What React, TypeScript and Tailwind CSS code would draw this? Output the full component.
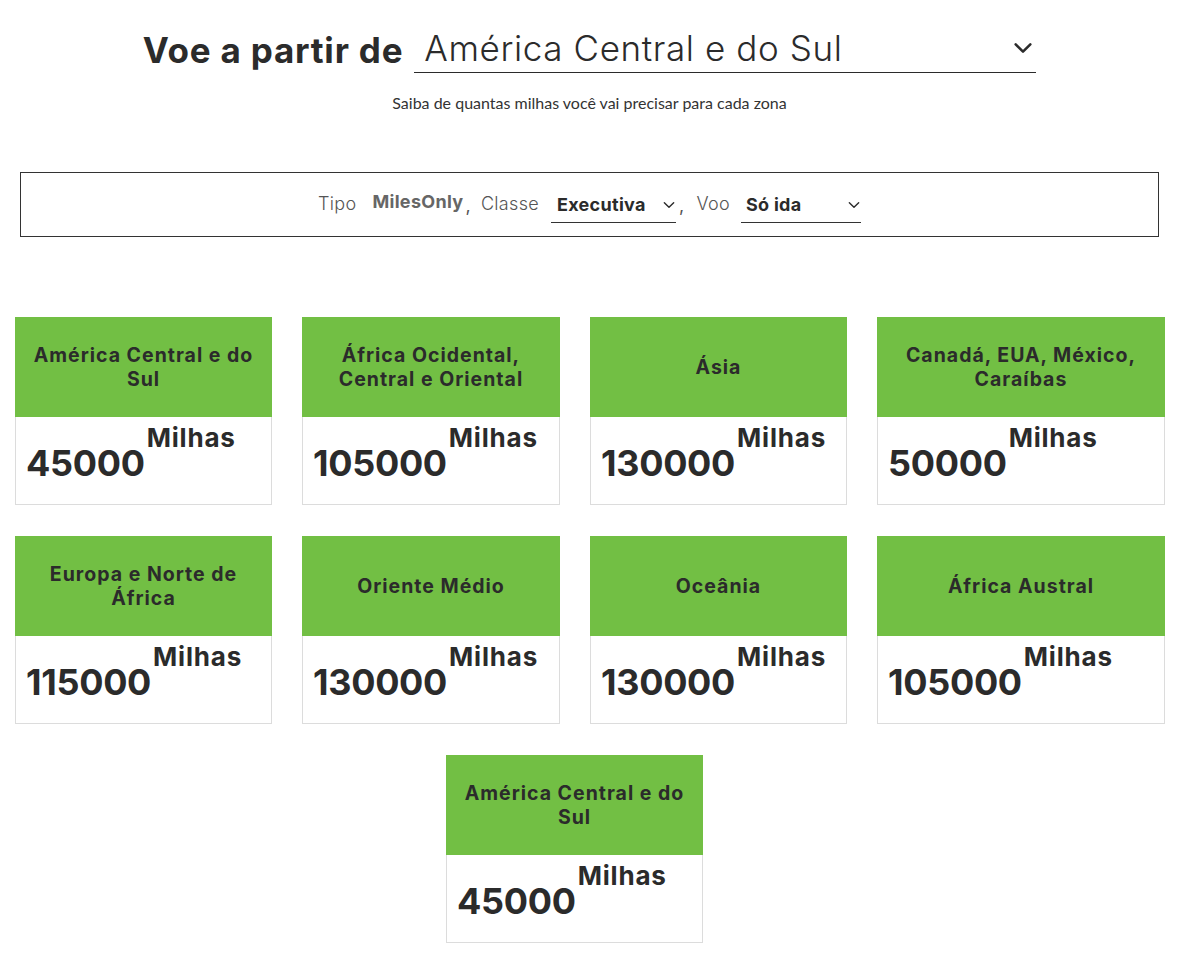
import React from "react";

const F = { fontFamily: "Inter, 'Open Sans', sans-serif" };

function Chevron({ size = 14, stroke = 2 }: { size?: number; stroke?: number }) {
  return (
    <svg width={size} height={size} viewBox="0 0 24 24" fill="none" stroke="#2b2b2b" strokeWidth={stroke} strokeLinecap="round" strokeLinejoin="round">
      <path d="M4 8l8 8 8-8" />
    </svg>
  );
}

type Zone = { name: React.ReactNode; miles: string };

const row1: Zone[] = [
  { name: <>América Central e do<br />Sul</>, miles: "45000" },
  { name: <>África Ocidental,<br />Central e Oriental</>, miles: "105000" },
  { name: <>Ásia</>, miles: "130000" },
  { name: <>Canadá, EUA, México,<br />Caraíbas</>, miles: "50000" },
];
const row2: Zone[] = [
  { name: <>Europa e Norte de<br />África</>, miles: "115000" },
  { name: <>Oriente Médio</>, miles: "130000" },
  { name: <>Oceânia</>, miles: "130000" },
  { name: <>África Austral</>, miles: "105000" },
];
const widths = ["w-[257px]", "w-[258px]", "w-[257px]", "w-[288px]"];

function Card({ z, w }: { z: Zone; w: string }) {
  return (
    <div className={`${w} h-[188px] flex flex-col`}>
      <div className="h-[100px] bg-[#72bf44] flex items-center justify-center text-center px-2">
        <div className="text-[19.5px] leading-[24px] font-bold text-[#2b2b2b] tracking-[1px]">{z.name}</div>
      </div>
      <div className="flex-1 bg-white border border-t-0 border-[#dcdcdc] pl-[10px] pt-[5px]">
        <div className="flex items-start text-[#2b2b2b] font-bold">
          <span className="text-[36px] leading-[36px] mt-[23px] tracking-[-0.3px]">{z.miles}</span>
          <span className="text-[26px] leading-[30px] mt-[1px] ml-[2px] tracking-[0.8px]">Milhas</span>
        </div>
      </div>
    </div>
  );
}

export default function App() {
  return (
    <div className="w-[1179px] bg-white pb-[15px]" style={F}>
      {/* Title */}
      <div className="flex justify-center items-end pt-[24px]">
        <div className="text-[35px] leading-[46px] font-bold text-[#2b2b2b] mr-[11px] tracking-[0.8px]">Voe a partir de</div>
        <div className="w-[622px] border-b border-[#2b2b2b] flex items-center justify-between pl-[10px] pr-[2px] h-[49px]">
          <span className="text-[35px] leading-[46px] font-light text-[#2b2b2b] tracking-[0.6px]">América Central e do Sul</span>
          <Chevron size={22} stroke={2.8} />
        </div>
      </div>
      <div className="text-center text-[16px] leading-[20px] text-[#333] mt-[20px]" style={{ fontFamily: "Lato, sans-serif" }}>
        Saiba de quantas milhas você vai precisar para cada zona
      </div>

      {/* Filter */}
      <div className="mx-[20px] mt-[59px] h-[65px] border border-[#333] flex items-center justify-center text-[18px] text-[#555] tracking-[0.3px]">
        <span className="font-light -mt-[2px]">Tipo</span>
        <span className="ml-[16px] font-bold text-[#666] -mt-[6px]">MilesOnly</span>
        <span className="ml-[2px] mt-[2px]">,</span>
        <span className="ml-[10px] font-light -mt-[2px]">Classe</span>
        <div className="ml-[12px] w-[125px] h-[34px] border-b border-[#333] flex items-center justify-between pl-[6px] mt-[2px]">
          <span className="font-bold text-[#2b2b2b] -mt-[2px]">Executiva</span>
          <Chevron size={14} stroke={2.4} />
        </div>
        <span className="ml-[3px] mt-[2px]">,</span>
        <span className="ml-[12px] font-light -mt-[2px]">Voo</span>
        <div className="ml-[11px] w-[120px] h-[34px] border-b border-[#333] flex items-center justify-between pl-[5px] mt-[2px]">
          <span className="font-bold text-[#2b2b2b] -mt-[2px]">Só ida</span>
          <Chevron size={14} stroke={2.4} />
        </div>
      </div>

      {/* Cards */}
      <div className="mt-[80px] flex flex-col gap-[31px]">
        <div className="flex gap-[30px] pl-[15px]">
          {row1.map((z, i) => <Card key={i} z={z} w={widths[i]} />)}
        </div>
        <div className="flex gap-[30px] pl-[15px]">
          {row2.map((z, i) => <Card key={i} z={z} w={widths[i]} />)}
        </div>
        <div className="flex justify-center pr-[30px]">
          <Card z={{ name: <>América Central e do<br />Sul</>, miles: "45000" }} w="w-[257px]" />
        </div>
      </div>
    </div>
  );
}
